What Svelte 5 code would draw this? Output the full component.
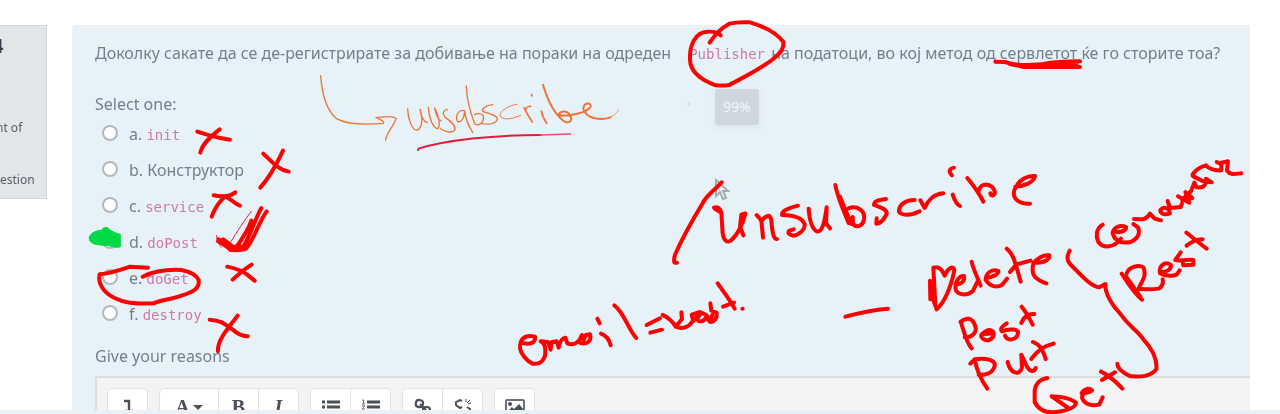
<script>
  const options = [
    { key: 'a', text: 'init', code: true },
    { key: 'b', text: 'Конструктор', code: false },
    { key: 'c', text: 'service', code: true },
    { key: 'd', text: 'doPost', code: true },
    { key: 'e', text: 'doGet', code: true },
    { key: 'f', text: 'destroy', code: true }
  ];
  let chosen = $state('');
</script>

<div class="page">
  <div class="content">
    <aside class="info">
      <h3>4</h3>
      <p class="grade">nt of</p>
      <p>estion</p>
    </aside>

    <main class="question">
      <p class="prompt">Доколку сакате да се де-регистрирате за добивање на пораки на одреден <code>Publisher</code> на податоци, во кој метод од сервлетот ќе го сторите тоа?</p>

      <fieldset>
        <legend>Select one:</legend>
        {#each options as o}
          <div class="option">
            <input type="radio" id={'opt-' + o.key} name="answer" value={o.key} bind:group={chosen} />
            <label for={'opt-' + o.key}>{o.key}. {#if o.code}<code>{o.text}</code>{:else}{o.text}{/if}</label>
          </div>
        {/each}
      </fieldset>

      <p class="reasons">Give your reasons</p>
      <div class="editor">
        <div class="group">
          <button aria-label="Expand toolbar"><svg width="16" height="16" viewBox="0 0 16 16"><path d="M4 2h5v10M5 11l4 4 4-4" fill="none" stroke="#4a5057" stroke-width="2.4" /></svg></button>
        </div>
        <div class="group">
          <button class="wide" aria-label="Paragraph styles"><span class="glyph">A</span><span class="caret"></span></button>
          <button aria-label="Bold"><span class="glyph">B</span></button>
          <button aria-label="Italic"><span class="glyph italic">I</span></button>
        </div>
        <div class="group">
          <button aria-label="Unordered list"><svg width="20" height="16" viewBox="0 0 20 16"><path d="M1 3h3M1 8h3M1 13h3M6 3h13M6 8h13M6 13h13" stroke="#4a5057" stroke-width="3" /></svg></button>
          <button aria-label="Ordered list"><svg width="20" height="16" viewBox="0 0 20 16"><path d="M6 3h13M6 8h13M6 13h13" stroke="#4a5057" stroke-width="3" /><path d="M1 1h1.500v4M1 5h3M1 7h3l-3 3h3M1 12h3v3h-3" fill="none" stroke="#6a7077" /></svg></button>
        </div>
        <div class="group">
          <button aria-label="Link"><svg width="18" height="18" viewBox="0 0 18 18"><g fill="none" stroke="#4a5057" stroke-width="2.200"><rect x="2" y="2" width="7" height="7" rx="3" transform="rotate(12 5 5)" /><rect x="9" y="9" width="7" height="7" rx="3" /><path d="M6 6l6 6" /></g></svg></button>
          <button aria-label="Unlink"><svg width="18" height="18" viewBox="0 0 18 18"><g fill="none" stroke="#4a5057" stroke-width="2"><path d="M8 3L6 2 2 4v3l4 3 2-1M10 15l2 1 4-2v-3l-3-2" /><path d="M12 1v3M14 6l3-1M13 5l3-3" stroke-width="1" /></g></svg></button>
        </div>
        <div class="group">
          <button aria-label="Image"><svg width="20" height="16" viewBox="0 0 20 16"><rect x="1" y="1" width="18" height="14" rx="1" fill="#fff" stroke="#6a7077" stroke-width="2" /><circle cx="5" cy="5" r="2" fill="#4a5057" /><path d="M4 13v-2l3-3 2 2 5-5 4 5v3z" fill="#4a5057" /></svg></button>
        </div>
      </div>
    </main>
  </div>
  <footer></footer>

  <div class="zoom">99%</div>

  <svg class="pointer" width="16" height="24" viewBox="0 0 16 24" aria-hidden="true">
    <path d="M2 2v16l4-4 3 7 3-1-3-7h5z" fill="#f4f6f8" stroke="#a3abb2" stroke-width="2" />
  </svg>

  <svg class="ink" width="1280" height="414" viewBox="0 0 1280 414" aria-hidden="true">
    <!-- orange pen note -->
    <g transform="translate(300 60) scale(.33333)" stroke="#ee7436" stroke-width="4">
      <path d="M62 47C66 100 76 150 110 176C140 194 200 194 250 190C256 184 232 174 228 173C250 170 282 168 288 176C284 196 262 212 257 240" />
      <path d="M323 146C323 170 334 210 351 211C366 205 370 178 360 148C364 172 372 186 382 188" />
      <path d="M385 142C387 168 396 204 414 206C422 196 416 165 404 144C408 166 416 180 424 183M442 148C430 150 426 160 434 170C448 182 470 196 464 211C454 220 434 216 422 206" />
      <path d="M492 152C476 148 465 166 472 184C484 190 494 172 494 152C496 176 506 198 518 217" />
      <path d="M499 78C500 115 512 160 524 191C536 200 552 190 550 168C545 158 528 160 524 164M578 134C560 136 544 145 548 154C566 160 594 166 592 178C586 194 562 194 544 190" />
      <path d="M650 133C620 138 594 158 602 170C614 182 640 176 662 166" stroke-width="3" />
      <path d="M672 143C680 160 690 176 697 186M676 152C678 142 686 138 692 139M695 103V108M724 153C728 170 734 182 740 190" stroke-width="5" />
      <path d="M729 74C742 118 762 160 790 182C804 194 816 184 813 172C806 152 784 148 775 165C800 170 860 160 872 140C874 126 852 126 850 146C858 176 900 182 932 172" stroke-width="6" />
      <path d="M925 173C942 168 952 158 955 149" stroke-width="2" />
      <path d="M354 270L356 266C440 240 580 225 722 225" stroke="#e31b38" stroke-width="6" />
      <path d="M720 225L812 222" stroke="#e94d69" stroke-width="4" />
      <path d="M1164 132h3" stroke="#efb7ba" />
    </g>

    <!-- crosses beside the first options -->
    <g transform="scale(.33333)">
      <path d="M592 395C625 406 650 414 690 419M659 388C626 414 606 434 601 458" />
      <path d="M790 461C812 480 832 508 866 515M849 452C836 480 812 528 781 563" />
      <path d="M641 586C670 592 690 590 706 577M674 590C690 592 700 610 720 617M674 590C656 606 643 628 635 650" />
    </g>

    <!-- tick, circled option and lower crosses -->
    <g transform="translate(60 200) scale(.33333)">
      <path d="M475 118C490 124 506 134 518 140L550 140C570 110 584 60 604 24M620 34C596 66 582 120 558 146C540 154 520 150 512 150C502 140 485 130 474 124M490 118L526 146C546 118 566 90 574 62" stroke-width="12" />
      <path d="M469 106C475 128 478 136 484 142M511 128C532 94 552 62 574 34" stroke="#df213c" stroke-width="3" />
      <path d="M264 203L210 200C180 210 154 220 119 223C112 250 132 280 164 294C190 308 220 312 282 310C300 300 336 298 366 286C400 276 420 264 416 240C408 222 386 214 364 210C320 208 280 214 248 230" stroke-width="12" />
      <path d="M502 200C530 206 550 214 564 226L584 242M575 194C552 208 534 224 518 239" />
      <path d="M449 359C492 362 500 378 520 390C536 406 550 408 563 409M533 347C512 376 470 420 474 454" />
      <path d="M88 112C92 98 108 92 124 91C132 78 144 80 152 92C166 98 174 102 181 103V140C166 146 150 136 138 136C112 136 84 132 88 112Z" fill="#00db45" stroke="#00db45" stroke-width="3" />
    </g>

    <!-- circled class name and underlined word -->
    <g transform="translate(660 10) scale(.33333)">
      <path d="M149 98C162 78 180 56 208 41C230 36 254 36 270 37C306 48 350 68 370 96C372 114 366 124 352 136C320 168 250 202 208 225C196 227 180 227 167 226C134 214 90 190 90 148C88 106 106 66 142 65C166 64 176 68 182 76" />
    </g>
    <g transform="translate(960 10) scale(.33333)">
      <path d="M106 155L135 156C172 168 200 166 250 162C290 154 320 154 360 154M150 162L192 171H360M200 167C250 162 300 164 350 161" />
    </g>

    <!-- red "unsubscribe" -->
    <g transform="translate(660 150) scale(.33333)">
      <path d="M185 97C156 128 136 140 128 160C94 216 64 272 46 312C42 322 41 338 44 338H51" />
      <path d="M162 173C174 168 180 176 184 188L188 250C192 274 202 278 212 272C234 254 250 218 256 190L244 194L240 230L250 256M164 176L178 185" />
      <path d="M290 195L304 211L309 263M304 214C318 194 330 192 334 210C336 240 340 270 351 267" />
      <path d="M414 167C384 174 364 184 366 195C390 196 424 198 434 222C436 242 412 256 400 257C386 254 382 248 388 242L401 238" />
      <path d="M446 176C448 206 456 236 470 244C484 248 492 230 500 172L498 220L510 235" />
      <path d="M526 105C532 140 548 176 566 219M566 175C590 166 616 180 612 208C608 230 588 234 579 222L578 201M540 140L574 222" />
      <path d="M678 147C652 150 642 154 642 165C660 172 682 176 680 192C670 212 660 222 649 221L650 205" />
      <path d="M779 184C754 198 714 198 717 180C720 162 738 150 764 150M781 151L794 174C802 154 820 132 850 130" />
      <path d="M878 134C884 152 890 164 900 168M876 76C864 64 868 56 882 53" />
      <path d="M922 84C940 106 958 130 970 155M955 126C960 102 980 98 998 112C1008 126 1006 138 994 136L991 130" />
      <path d="M1066 110C1092 108 1122 98 1125 78C1102 76 1078 90 1070 108C1052 132 1062 162 1110 161" />
    </g>

    <!-- "email=kost." -->
    <g transform="translate(500 260) scale(.33333)">
      <path d="M66 248C90 256 108 248 105 230C82 224 66 232 62 248C52 274 80 302 98 311C118 314 128 306 135 288C138 260 134 250 122 244L144 246L152 269L154 247L170 244L176 263C178 250 184 236 196 233L202 250C218 256 230 252 240 237L246 225L236 245C248 256 278 250 270 223L258 225L251 239" />
      <path d="M292 176L299 190M303 221C322 228 328 240 332 256M343 136C372 156 386 212 409 234M440 195L480 175M451 218L486 209" />
      <path d="M488 165C502 170 520 186 527 200L546 177L544 157M527 200C550 210 568 198 574 188L604 158L590 178C600 190 620 182 620 166L600 156L575 164L580 184M620 166L629 185C640 188 652 178 650 158L634 152L631 130M629 185L637 165" />
      <path d="M653 70C670 94 690 120 704 146M669 140L702 128M727 146h1" />
    </g>

    <!-- list of HTTP methods -->
    <g transform="translate(830 230) scale(.33333)">
      <path d="M46 260C90 248 126 240 174 236" />
      <path d="M300 152L301 208L306 168L316 224L310 113C326 108 334 116 344 137C356 110 372 106 373 122C364 164 350 210 320 238L310 210L305 160" />
      <path d="M379 162C390 164 406 156 402 138C388 136 372 156 378 182C390 198 414 196 428 184L442 156M425 95C432 126 444 144 452 167M467 145C490 140 508 132 505 123C488 116 466 128 467 150C480 170 500 174 516 165L531 146" />
      <path d="M530 56C552 74 556 100 572 155M540 126L558 104L602 92M610 98C630 100 660 94 658 76C640 74 620 84 610 102C602 134 614 148 649 160" />
      <path d="M392 275C404 310 408 336 425 355M392 276C408 262 426 262 434 284C444 304 430 322 404 322M455 313C464 304 470 302 476 300C496 302 496 320 478 330C462 334 450 322 455 313L488 310M530 280C514 290 510 298 516 304C540 294 568 298 564 310C560 332 530 334 525 317M575 230C590 248 598 264 608 284M574 279C582 258 594 250 613 252" />
      <path d="M421 401L434 388C440 420 458 456 472 476M434 388C470 382 498 392 494 408C488 432 462 436 446 434M533 396C540 430 570 440 576 412L574 374L592 412C600 424 612 428 617 414M609 336C634 346 638 360 647 387M604 387C626 358 640 350 671 341" />
    </g>

    <!-- bracket, "Rest" and "Get" -->
    <g transform="translate(1020 150) scale(.33333)">
      <path d="M149 302C140 320 140 330 150 342C182 374 212 410 238 412L256 402C254 430 278 468 298 488C330 534 352 540 370 568C402 602 412 630 409 658C390 682 360 680 332 679C308 668 292 656 292 641" />
      <path d="M248 224C226 236 228 262 235 276C250 296 282 294 303 266M290 246C306 248 320 240 318 231C300 224 280 232 278 250C286 278 310 280 332 276C358 264 360 246 354 232L340 222M342 207C360 206 374 216 390 191L404 206L423 211" />
      <path d="M421 180C430 168 446 172 450 190C438 196 424 192 421 184M443 153L450 174L482 171L486 160M474 139L508 158L496 126L517 144L486 149L513 124L523 98L530 112C546 114 560 110 558 86L575 97L550 94" />
      <path d="M548 93C530 82 512 80 519 72C530 56 542 50 558 46C566 56 584 62 604 61V43L590 36M604 38L624 34L621 62C630 76 644 72 664 70" />
      <path d="M305 371C324 400 342 430 366 449M318 379L361 440M320 370C326 352 354 342 370 352C382 380 362 398 356 416C380 418 408 420 420 414C428 406 430 396 428 388M420 366C440 368 456 356 452 344C432 332 416 350 420 370C438 380 460 378 470 374L479 361M482 307L466 330C478 336 496 326 520 330V344L490 346L488 334M499 248C520 264 538 280 560 296M500 287C514 276 528 268 548 268" />
      <path d="M82 684C58 688 46 704 44 720V756C56 780 76 788 100 787C130 784 166 778 168 758C148 742 120 740 95 739L145 774M185 730C194 714 210 714 216 721C206 732 182 724 187 746C196 766 220 768 238 763L248 742M243 665C272 678 288 696 307 716M246 690L285 667" />
    </g>
  </svg>
</div>

<style>
  :global(body) {
    margin: 0;
    background: #fff;
  }
  .page {
    position: relative;
    display: flex;
    flex-direction: column;
    height: 100vh;
    overflow: hidden;
    font: 16px/24px "Noto Sans", sans-serif;
    color: #71808d;
  }
  .content {
    flex: 1;
    min-height: 0;
    display: flex;
    align-items: flex-start;
    gap: 25px;
    padding: 25px 30px 0 0;
    overflow: hidden;
  }
  footer {
    flex: none;
    height: 4px;
    background: #e7f2f8;
  }
  .info {
    flex: none;
    width: 46px;
    padding-bottom: 6px;
    background: #e2e6e9;
    border: 1px solid #d2d6d9;
    border-left: 0;
    font-size: 12px;
    color: #555d65;
    filter: blur(0.6px);
  }
  .info h3 {
    margin: 8px 0 0 -8px;
    font-size: 20px;
    line-height: 24px;
    color: #34424f;
  }
  .info p {
    margin: 28px 0 0;
  }
  .info .grade {
    margin: 58px 0 0 -4px;
  }
  .question {
    flex: 1;
    min-width: 0;
    box-sizing: border-box;
    padding: 16px 0 0 23px;
    background: #e7f2f8;
    border-radius: 4px 0 0 0;
  }
  .prompt, fieldset, .reasons, .editor {
    filter: blur(0.6px);
  }
  .prompt {
    margin: 0 0 27px;
    white-space: nowrap;
  }
  code {
    font: 14px "DejaVu Sans Mono", monospace;
    color: #cf78ab;
  }
  .prompt code {
    padding: 0 2px 0 14px;
  }
  fieldset {
    margin: 0;
    padding: 0;
    border: 0;
  }
  legend {
    padding: 0;
  }
  .option {
    display: flex;
    align-items: center;
    gap: 11px;
    height: 36px;
    padding-left: 7px;
  }
  input {
    appearance: none;
    flex: none;
    box-sizing: border-box;
    width: 16px;
    height: 16px;
    margin: 0 0 3px;
    border: 2px solid #b3b8bb;
    border-radius: 50%;
    background: #fff;
  }
  input:checked {
    background: #71808d;
  }
  .reasons {
    margin: 12px 0 8px;
  }
  .editor {
    display: flex;
    gap: 11px;
    padding: 10px 10px;
    border: 2px solid #d9dde0;
    border-right: 0;
    background: #f3f3f3;
  }
  .group {
    display: flex;
    border: 1px solid #e0e1e2;
    border-radius: 5px;
    background: #fff;
  }
  button {
    display: flex;
    align-items: center;
    justify-content: center;
    gap: 3px;
    width: 39px;
    height: 36px;
    padding: 0;
    border: 0;
    background: none;
    color: #4a5057;
  }
  button + button {
    width: 40px;
    border-left: 1px solid #e0e1e2;
  }
  .wide {
    width: 58px;
  }
  .glyph {
    font: bold 20px/20px "Liberation Serif", serif;
  }
  .italic {
    font-style: italic;
  }
  .caret {
    border: 5px solid transparent;
    border-top-color: #4a5057;
    border-bottom: 0;
  }
  .zoom {
    position: absolute;
    left: 715px;
    top: 89px;
    padding: 6px 8px;
    border-radius: 3px;
    background: #cfd6dd;
    box-shadow: 0 2px 6px #d9e3e9;
    font-size: 14px;
    color: #f3f7fa;
  }
  .pointer {
    position: absolute;
    left: 714px;
    top: 178px;
    filter: blur(0.6px);
  }
  .ink {
    position: absolute;
    left: 0;
    top: 0;
    pointer-events: none;
    fill: none;
    stroke: #fe0000;
    stroke-width: 12px;
    stroke-linecap: round;
    stroke-linejoin: round;
  }
</style>
